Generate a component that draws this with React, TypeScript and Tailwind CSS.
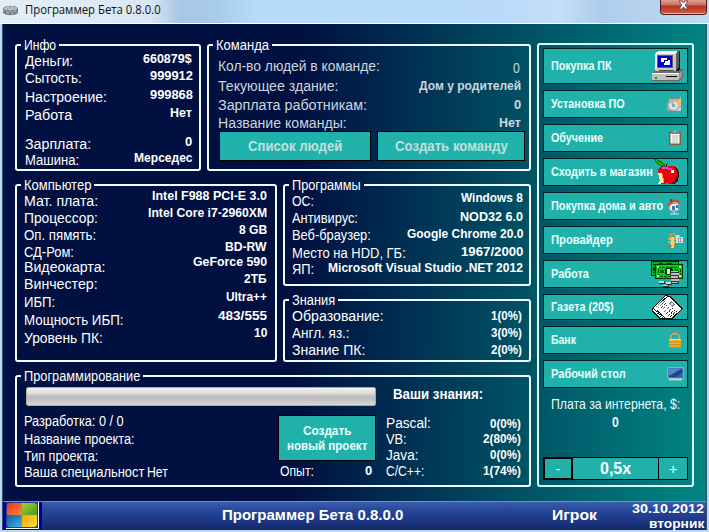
import { useLayoutEffect, useRef, useState } from 'react';
import type { ReactNode } from 'react';

/* Text squeezed or stretched horizontally to a given width. */
function Fit({ w, className = '', children }: { w: number; className?: string; children: ReactNode }) {
  const ref = useRef<HTMLSpanElement>(null);
  const [scale, setScale] = useState(1);
  useLayoutEffect(() => {
    if (ref.current && ref.current.offsetWidth) {
      setScale(w / ref.current.offsetWidth);
    }
  }, [w, children]);
  return (
    <span className={`block shrink-0 ${className}`} style={{ width: w }}>
      <span ref={ref} className="inline-block origin-left whitespace-nowrap align-top" style={{ transform: `scaleX(${scale})` }}>
        {children}
      </span>
    </span>
  );
}

type Line = [text: string, width: number, className: string];

function Labels({ lines, className = '' }: { lines: Line[]; className?: string }) {
  return (
    <div className={`flex flex-col items-start text-[14px] leading-[14px] ${className}`}>
      {lines.map(([text, w, cls]) => (
        <Fit key={text} w={w} className={cls}>{text}</Fit>
      ))}
    </div>
  );
}

function Values({ lines, className = '' }: { lines: Line[]; className?: string }) {
  return (
    <div className={`flex flex-col items-end text-[13px] leading-[14px] font-bold ${className}`}>
      {lines.map(([text, w, cls], i) => (
        <Fit key={i} w={w} className={cls}>{text}</Fit>
      ))}
    </div>
  );
}

function Group({ title, w, className, children }: { title: string; w: number; className: string; children: ReactNode }) {
  return (
    <fieldset className={`m-0 min-w-0 shrink-0 rounded-[3px] border-2 border-[#f2fbff] p-0 ${className}`}>
      <legend className="ml-[4px] px-[3px] text-[14px] leading-[14px]">
        <Fit w={w}>{title}</Fit>
      </legend>
      <div className="-mt-[6px]">{children}</div>
    </fieldset>
  );
}

const px = { shapeRendering: 'crispEdges' as const };

function ComputerIcon() {
  return (
    <svg width="31" height="32" viewBox="0 0 31 32" {...px}>
      <path d="M3 4 6 1h19v2l-3 1z" fill="#e8e8e8" />
      <path d="M24 3l2-2h1v17l-4 4V4z" fill="#5c5c5c" />
      <path d="M27 1h1v18l-3 3h-1v-2l3-3z" fill="#101010" />
      <path d="M3 3h21v18H3z" fill="#c8c8c8" />
      <path d="M4 2h20v2H4zM3 4h2v15H3z" fill="#f4f4f4" />
      <path d="M5 5h16v13H5z" fill="#606060" />
      <path d="M6 6h14v11H6z" fill="#0000c8" />
      <path d="M9 8h6v4H9zM12 10h6v5h-6z" fill="#fff" />
      <path d="M12 10h4v1h-4zM12 10h1v3h-1z" fill="#000080" />
      <path d="M7 20h15v2H7z" fill="#505050" />
      <path d="M0 23l3-2h23l3-2h2v8l-4 4H0z" fill="#6c6c6c" />
      <path d="M0 23h27v8H0z" fill="#c0c0c0" />
      <path d="M0 23h27v1H0z" fill="#fff" />
      <path d="M14 26h11v1H14z" fill="#000" />
      <path d="M0 30h27v1H0z" fill="#666" />
      <path d="M3 27h2v2H3z" fill="#00a000" />
      <path d="M27 23l3-3v6l-3 4z" fill="#999" />
    </svg>
  );
}

function SoftwareIcon() {
  return (
    <svg width="16" height="16" viewBox="0 0 16 16">
      <path d="M3 1h12v14H4V6H3z" fill="#a9c0cc" />
      <path d="M3 1h11v2H3z" fill="#748992" />
      <path d="M4 3h10v2H4z" fill="#e7b64d" />
      <path d="M12 4h3v6h-3z" fill="#f0c65a" />
      <path d="M1 6h8v9H1z" fill="#9ba5a5" />
      <circle cx="7.500" cy="9.500" r="5" fill="#dfe3e3" stroke="#939999" strokeWidth=".7" />
      <path d="M7.500 9.500 4 5.700A5 5 0 0 1 8 4.600z" fill="#b0b6b9" />
      <circle cx="7.500" cy="9.500" r="1.600" fill="#788486" />
      <circle cx="7.500" cy="9.500" r=".6" fill="#fff" />
      <path d="M12 12h3v3h-3z" fill="#cad3d6" />
    </svg>
  );
}

function ClipboardIcon() {
  return (
    <svg width="14" height="16" viewBox="0 0 14 16">
      <rect x="1" y="2" width="12" height="13" rx="1" fill="#7d6044" />
      <path d="M2.500 3.500h9v10h-9z" fill="#fbfbf5" />
      <path d="M4 1.500h6v2.500H4z" fill="#778087" />
      <path d="M5.500.5h3v2h-3z" fill="#a7adaf" />
      <path d="M4 6h6M4 8h6M4 10h6M4 12h6" stroke="#9eaaac" strokeWidth=".8" />
    </svg>
  );
}

function AppleIcon() {
  return (
    <svg width="26" height="26" viewBox="0 0 26 26" {...px}>
      <path d="M5 9c2-2 5-3 8-1 4-2 8-1 10 1 3 5 2 11-3 16h-5l-2-1-2 1H6l2-6-3-3-1-4z" fill="#ec0014" />
      <path d="M23 9c4 5 2 12-3 16h-4c6-3 8-9 7-16z" fill="#9c0014" />
      <path d="M20 8c6 3 6 12 0 17" stroke="#2a0006" fill="none" />
      <path d="M4 14h3l2 2-1 3 2 1-1 4-5 1 2-4-1-3z" fill="#ffefb0" />
      <path d="M8 15l1 2-1 2 2 1-1 4" stroke="#ff9a50" fill="none" />
      <path d="M8 8h6v2H8zM14 9h4v2h-4z" fill="#f040c8" />
      <path d="M17 11h3v3h-3z" fill="#fff" />
      <path d="M12 8c0-2 0-3 2-4" stroke="#402000" fill="none" />
      <path d="M0 0l5 1 4 2 2 3v2L7 7 3 5z" fill="#087d16" />
      <path d="M2 1l3 3 4 2" stroke="#1fd31f" fill="none" />
    </svg>
  );
}

function HouseIcon() {
  return (
    <svg width="16" height="17" viewBox="0 0 16 17">
      <circle cx="8" cy="8.500" r="5.500" fill="#8fb8d8" />
      <path d="M4 6h8v6H4z" fill="#f0f4f8" />
      <path d="M1 7.500 7 1l6 1.500 1.500 4.500-3.500-3-3 0-5 4.500z" fill="#c4502f" />
      <path d="M4 1h2v3H4z" fill="#8d3c2b" />
      <path d="M6 8h3v4H6z" fill="#4774ad" />
      <path d="M10 7h2.500v3H10z" fill="#3473b8" />
      <path d="M7.500 14h1.500v2H7.500zM4 15.300h9v1.200H4z" fill="#c7d4da" />
    </svg>
  );
}

function ProviderIcon() {
  return (
    <svg width="16" height="16" viewBox="0 0 16 16">
      <path d="M3 6V3.500C3 1 8 1 8 3.500V6" fill="none" stroke="#c59a52" strokeWidth="1.500" />
      <path d="M1 6h8v2H1zM1 9h9v1.700H1zM3 11h5v1.500H3z" fill="#e9aa33" />
      <path d="M4 5h3v11H4z" fill="#ffd568" />
      <path d="M0 5.500h1v5H0zM3 13h1.500v2H3zM7 13h1v2H7z" fill="#b97813" />
      <path d="M8.500 3h4v2H16v6H9.500z" fill="#d9dcd6" />
      <path d="M11 6h4v4h-4z" fill="#8f9892" />
      <path d="M12 7h1v2h-1zM14 7h1v2h-1z" fill="#fff" />
    </svg>
  );
}

function MoneyIcon() {
  return (
    <svg width="33" height="26" viewBox="0 0 33 26" {...px}>
      <path d="M0 0h28v15H0z" fill="#003800" />
      <path d="M1 1h26v13H1z" fill="#00b41c" />
      <path d="M2 3h4v1H2zM2 6h2v4H2zM2 11h3v1H2zM8 2h4v1H8zM15 2h6v1h-6z" fill="#004700" />
      <path d="M4 3h28v15H4z" fill="#003800" />
      <path d="M5 4h26v13H5z" fill="#0bc71f" />
      <path d="M7 6h22v9H7z" fill="none" stroke="#005000" strokeDasharray="3 1" />
      <path d="M6 5h2v2H6zM28 5h2v2h-2zM6 14h2v2H6zM28 14h2v2h-2z" fill="#d4ff70" />
      <path d="M9 9h4v3H9zM24 8h3v2h-3z" fill="#006a10" />
      <circle cx="18" cy="10.500" r="4" fill="#003000" />
      <path d="M16 8h3v5h-3z" fill="#e0f2d0" />
      <path d="M20 10h8v13h-8z" fill="#303030" />
      <path d="M20 10h7v1h-7zM20 12h8v2h-8zM20 15h7v2h-7zM20 18h8v2h-8zM21 21h6v1h-6z" fill="#b9bdbd" />
      <path d="M8 20h6v3H8zM15 21h6v3h-6zM12 24h6v2h-6z" fill="#333" />
      <path d="M8 20h5v2H8zM15 21h5v2h-5zM12 24h5v1h-5z" fill="#d2d6d6" />
    </svg>
  );
}

function NewspaperIcon() {
  return (
    <svg width="31" height="24" viewBox="0 0 31 24" {...px}>
      <path d="M0 13 13 0l5 1 13 13-11 10H7l-7-8z" fill="#111" />
      <path d="M1 13 13 1l4 1-4 5-8 9zM6 15 17 2l13 12-11 9h-6z" fill="#fff" />
      <path d="M1 14l4 2 7 7H8l-7-7z" fill="#fff" />
      <path d="M3 15l7 8M5 16l6 7" stroke="#222" strokeDasharray="1 1" />
      <path d="M4 12l7-7M6 13l7-7" stroke="#777" strokeDasharray="2 1" />
      <path d="M9 13l6-6M16 21l9-8M18 22l8-7M14 19l9-8" stroke="#333" strokeDasharray="1 1" />
      <path d="M11 14l4-4M12 17l6-6" stroke="#666" strokeDasharray="1 1" />
      <path d="M19 6l4 4-3 2-3-3z" fill="#8a8a8a" />
      <path d="M19 8h2v2h-2z" fill="#e0e0e0" />
      <path d="M9 7l6-5" stroke="#000" />
    </svg>
  );
}

function LockIcon() {
  return (
    <svg width="14" height="16" viewBox="0 0 14 16">
      <path d="M3 8V4.500C3 .1 11 .1 11 4.500V8" fill="none" stroke="#9a7952" strokeWidth="2.200" />
      <path d="M3 8V4.500C3 .5 11 .5 11 4.500V8" fill="none" stroke="#e6d8a8" strokeWidth=".9" />
      <path d="M1 7h12v8.500H1z" fill="#eeb62d" />
      <path d="M1 7h12v1H1z" fill="#ffe080" />
      <path d="M1 10h12M1 12.500h12M1 15h12" stroke="#c18718" strokeWidth=".9" />
    </svg>
  );
}

function DesktopIcon() {
  return (
    <svg width="17" height="14" viewBox="0 0 17 14">
      <path d="M.5.5h16v11H.5z" fill="#b9cede" />
      <path d="M1.300 1.300h14.400v9.400H1.300z" fill="#1b4391" />
      <path d="M1.500 1.500H15L2 9z" fill="#5189c9" />
      <path d="M9 10.500 15.500 5v5.500z" fill="#3567b3" />
      <path d="M2 11.500h13v2H2z" fill="#c7d1d5" />
    </svg>
  );
}

function AppIcon() {
  return (
    <svg width="17" height="11" viewBox="0 0 17 11">
      <path d="M1 3C4 0 13 0 16 3v5c-3 3-12 3-15 0z" fill="#777c84" />
      <path d="M1 3c4-2 11-2 15 0-3 3-12 3-15 0z" fill="#adb1b8" />
      <path d="M2 2.500 7 9M5 1.500 11 9M9 1l6 7M7 1 1 6M12 1.500 4 9M15 2.500 9 10" stroke="#d9dce0" strokeWidth=".5" />
    </svg>
  );
}

function StartLogo() {
  return (
    <svg width="33" height="27" viewBox="0 0 33 27">
      <defs>
        <linearGradient id="r" x2="1" y2="1"><stop stopColor="#ed331d" /><stop offset="1" stopColor="#f58a3a" /></linearGradient>
        <linearGradient id="g" x2="1" y2="1"><stop stopColor="#a4d532" /><stop offset="1" stopColor="#46961d" /></linearGradient>
        <linearGradient id="b" x2="1" y2="1"><stop stopColor="#125b9e" /><stop offset="1" stopColor="#43b7e5" /></linearGradient>
        <linearGradient id="y" x2="1" y2="1"><stop stopColor="#f5a500" /><stop offset="1" stopColor="#ffe13d" /></linearGradient>
      </defs>
      <path d="M0 0h33v27H0z" fill="#fff" />
      <path d="M0 0h32v26H0z" fill="#24408e" />
      <path d="M3 1h13v12H1V3z" fill="url(#r)" />
      <path d="M16 1h13l2 2v10H16z" fill="url(#g)" />
      <path d="M1 13h15v12H3l-2-2z" fill="url(#b)" />
      <path d="M16 13h15v10l-2 2H16z" fill="url(#y)" />
    </svg>
  );
}

const info: Line[] = [
  ['Деньги:', 48, 'mt-[8px]'],
  ['Сытость:', 57, 'mt-[3px]'],
  ['Настроение:', 82, 'mt-[5px]'],
  ['Работа', 47, 'mt-[4px]'],
  ['Зарплата:', 66, 'mt-[15px]'],
  ['Машина:', 54, 'mt-[2px]'],
];
const infoValues: Line[] = [
  ['660879$', 49, 'mt-[6px]'],
  ['999912', 42.5, 'mt-[3px]'],
  ['999868', 42.5, 'mt-[5px]'],
  ['Нет', 22, 'mt-[4px]'],
  ['0', 7, 'mt-[15px]'],
  ['Мерседес', 58.5, 'mt-[2px]'],
];
const team: Line[] = [
  ['Кол-во людей в команде:', 162, 'mt-[13px]'],
  ['Текующее здание:', 120, 'mt-[6px]'],
  ['Зарплата работникам:', 149, 'mt-[5px]'],
  ['Название команды:', 129, 'mt-[4px]'],
];
const teamValues: Line[] = [
  ['0', 7, 'mt-[15px] mr-[1px] text-[14px] font-normal'],
  ['Дом у родителей', 102, 'mt-[4px]'],
  ['0', 7, 'mt-[5px]'],
  ['Нет', 22, 'mt-[4px]'],
];
const computer: Line[] = [
  ['Мат. плата:', 74, 'mt-[8px]'],
  ['Процессор:', 74, 'mt-[3px]'],
  ['Оп. пямять:', 72, 'mt-[3px]'],
  ['СД-Ром:', 50, 'mt-[3px]'],
  ['Видеокарта:', 82, 'mt-[1px]'],
  ['Винчестер:', 74, 'mt-[3px]'],
  ['ИБП:', 31, 'mt-[4px]'],
  ['Мощность ИБП:', 99, 'mt-[4px]'],
  ['Уровень ПК:', 79, 'mt-[4px]'],
];
const computerValues: Line[] = [
  ['Intel F988 PCI-E 3.0', 115, 'mt-[3px]'],
  ['Intel Core i7-2960XM', 119, 'mt-[3px]'],
  ['8 GB', 28, 'mt-[3px]'],
  ['BD-RW', 42, 'mt-[3px]'],
  ['GeForce 590', 74, 'mt-[1px]'],
  ['2ТБ', 23, 'mt-[3px]'],
  ['Ultra++', 41, 'mt-[4px]'],
  ['483/555', 49, 'mt-[5px]'],
  ['10', 13, 'mt-[3px]'],
];
const programs: Line[] = [
  ['ОС:', 22, 'mt-[8px]'],
  ['Антивирус:', 66, 'mt-[3px]'],
  ['Веб-браузер:', 79, 'mt-[3px]'],
  ['Место на HDD, ГБ:', 114, 'mt-[4px]'],
  ['ЯП:', 22, 'mt-[2px]'],
];
const programValues: Line[] = [
  ['Windows 8', 62, 'mt-[5px]'],
  ['NOD32 6.0', 63, 'mt-[5px]'],
  ['Google Chrome 20.0', 116, 'mt-[3px]'],
  ['1967/2000', 62, 'mt-[4px]'],
  ['Microsoft Visual Studio .NET 2012', 195, 'mt-[2px]'],
];
const knowledge: Line[] = [
  ['Образование:', 92, 'mt-[8px]'],
  ['Англ. яз.:', 58, 'mt-[3px]'],
  ['Знание ПК:', 73, 'mt-[3px]'],
];
const knowledgeValues: Line[] = [
  ['1(0%)', 31, 'mt-[8px]'],
  ['3(0%)', 31, 'mt-[3px]'],
  ['2(0%)', 31, 'mt-[3px]'],
];
const languages: Line[] = [
  ['Pascal:', 45, 'mt-[39px]'],
  ['VB:', 21, 'mt-[2px]'],
  ['Java:', 32, 'mt-[2px]'],
  ['C/C++:', 38, 'mt-[2px]'],
];
const languageValues: Line[] = [
  ['0(0%)', 31, 'mt-[40px]'],
  ['2(80%)', 38, 'mt-[1px]'],
  ['0(0%)', 31, 'mt-[2px]'],
  ['1(74%)', 38, 'mt-[2px]'],
];

const menu: { text: string; w: number; h: string; icon: ReactNode; pad: string }[] = [
  { text: 'Покупка ПК', w: 61, h: 'h-[36px]', icon: <ComputerIcon />, pad: 'pr-[4px]' },
  { text: 'Установка ПО', w: 74, h: 'h-[28px]', icon: <SoftwareIcon />, pad: 'pr-[5px]' },
  { text: 'Обучение', w: 52, h: 'h-[28px]', icon: <ClipboardIcon />, pad: 'pr-[5px]' },
  { text: 'Сходить в магазин', w: 102, h: 'h-[28px]', icon: <AppleIcon />, pad: 'pr-[7px]' },
  { text: 'Покупка дома и авто', w: 112, h: 'h-[28px]', icon: <HouseIcon />, pad: 'pr-[5px]' },
  { text: 'Провайдер', w: 62, h: 'h-[28px]', icon: <ProviderIcon />, pad: 'pr-[4px]' },
  { text: 'Работа', w: 38, h: 'h-[28px]', icon: <MoneyIcon />, pad: 'pr-[3px]' },
  { text: 'Газета (20$)', w: 63, h: 'h-[26px]', icon: <NewspaperIcon />, pad: 'pr-[4px]' },
  { text: 'Банк', w: 25, h: 'h-[28px]', icon: <LockIcon />, pad: 'pr-[5px]' },
  { text: 'Рабочий стол', w: 75, h: 'h-[28px]', icon: <DesktopIcon />, pad: 'pr-[3px]' },
];

function TitleBar() {
  return (
    <header className="flex h-[24px] shrink-0 items-start justify-between border-b border-white bg-[linear-gradient(90deg,#e3eef8_0,#d9e7f5_150px,#a9c6e4_180px,#a8cbec_215px,#b8dafb_260px,#b9dafa_500px,#c4dff8_560px,#aecdeb_600px,#c0daf3_709px)] pl-[2px]">
      <div className="flex items-center pt-[2px]">
        <AppIcon />
        <Fit w={136} className="ml-[6px] font-['Open_Sans','Noto_Sans',sans-serif] text-[12px] leading-[16px] text-[#101010]">
          Программер Бета 0.8.0.0
        </Fit>
      </div>
      <button className="mr-[2px] flex h-[15px] w-[47px] justify-center rounded-b-[4px] border border-t-0 border-[#4b1a1c] bg-[linear-gradient(#e0a095_0,#cf6f62_5px,#b83224_6px,#d25c43_100%)] shadow-[inset_0_-1px_0_#eeb0a0]">
        <svg width="11" height="10" viewBox="0 0 11 10">
          <path d="M1 1h3l1.500 2L7 1h3L7.200 5 10 9H7L5.500 7 4 9H1l2.800-4z" fill="#fff" stroke="#5c3838" strokeWidth=".8" />
        </svg>
      </button>
    </header>
  );
}

export default function App() {
  return (
    <div className="flex h-[532px] w-[709px] flex-col overflow-hidden bg-[#bdd9f2] font-['Liberation_Sans',Arial,sans-serif] text-white">
      <TitleBar />
      <div className="mr-[2px] ml-[2px] flex h-[506px] shrink-0 flex-col border-x border-[#31506f] bg-[linear-gradient(91deg,#001040_0,#001040_42%,#008381_98%)]">
        <main className="flex h-[477px] gap-[6px] pt-[14px] pl-[12px]">
          <div className="flex w-[516px] shrink-0 flex-col gap-[7px]">
            <div className="flex gap-[6px]">
              <Group title="Инфо" w={32} className="h-[133px] w-[186px]">
                <div className="flex justify-between pr-[7px] pl-[8px]">
                  <Labels lines={info} />
                  <Values lines={infoValues} />
                </div>
              </Group>
              <Group title="Команда" w={53} className="h-[133px] w-[324px]">
                <div className="flex justify-between pr-[8px] pl-[9px] text-[#cdd6de]">
                  <Labels lines={team} />
                  <Values lines={teamValues} />
                </div>
                <div className="mt-px flex gap-[6px] pl-[10px] text-[14px] leading-[16px] font-bold text-[#bfe0dd]">
                  <button className="flex h-[30px] w-[152px] items-center justify-center border border-black bg-[#20b2aa]">
                    <Fit w={94}>Список людей</Fit>
                  </button>
                  <button className="flex h-[30px] w-[148px] items-center justify-center border border-black bg-[#20b2aa]">
                    <Fit w={113}>Создать команду</Fit>
                  </button>
                </div>
              </Group>
            </div>
            <div className="flex gap-[6px]">
              <Group title="Компьютер" w={67} className="h-[184px] w-[262px]">
                <div className="flex justify-between pr-[8px] pl-[7px]">
                  <Labels lines={computer} className="w-[100px]" />
                  <Values lines={computerValues} />
                </div>
              </Group>
              <div className="flex flex-col gap-[7px]">
                <Group title="Программы" w={69} className="h-[108px] w-[248px]">
                  <div className="flex pr-[6px] pl-[7px]">
                    <Labels lines={programs} className="w-0" />
                    <Values lines={programValues} className="flex-1" />
                  </div>
                </Group>
                <Group title="Знания" w={43} className="h-[69px] w-[248px]">
                  <div className="flex justify-between pr-[7px] pl-[7px]">
                    <Labels lines={knowledge} />
                    <Values lines={knowledgeValues} />
                  </div>
                </Group>
              </div>
            </div>
            <Group title="Программирование" w={116} className="h-[118px] w-[516px]">
              <div className="flex">
                <div className="w-[359px] pt-[10px] pl-[9px]">
                  <div className="h-[19px] w-[350px] rounded-[2px] border border-[#a8a8a8] bg-[linear-gradient(#f4f4f4_0,#d8d8d8_6px,#bcbcbc_8px,#c2c2c2_12px,#d8d8d8_100%)]" />
                  <div className="flex justify-between">
                    <div className="-ml-[2px] pt-[8px] text-[14px] leading-[14px]">
                      <Fit w={100}>Разработка: 0 / 0</Fit>
                      <Fit w={111} className="mt-[4px]">Название проекта:</Fit>
                      <Fit w={74} className="mt-[3px]">Тип проекта:</Fit>
                      <div className="mt-[2px] flex gap-[3px]">
                        <Fit w={120}>Ваша специальност</Fit>
                        <Fit w={21}>Нет</Fit>
                      </div>
                    </div>
                    <div className="w-[98px] pt-[9px]">
                      <button className="flex h-[46px] w-[98px] flex-col items-center justify-center border border-black bg-[#20b2aa] text-[13px] leading-[15px] font-bold text-[#eafffc]">
                        <Fit w={48}>Создать</Fit>
                        <Fit w={80}>новый проект</Fit>
                      </button>
                      <div className="mt-[3px] flex justify-between pr-[4px] pl-[2px] text-[14px] leading-[14px]">
                        <Fit w={34}>Опыт:</Fit>
                        <Fit w={7} className="text-[13px] font-bold">0</Fit>
                      </div>
                    </div>
                  </div>
                </div>
                <div className="w-[145px] pl-[10px]">
                  <Fit w={90} className="-mb-[24px] ml-[7px] pt-[10px] text-[14px] leading-[14px] font-bold">Ваши знания:</Fit>
                  <div className="flex justify-between">
                    <Labels lines={languages} />
                    <Values lines={languageValues} />
                  </div>
                </div>
              </div>
            </Group>
          </div>
          <aside className="mt-[5px] flex h-[444px] w-[157px] shrink-0 flex-col rounded-[3px] border-2 border-[#d9fbff] pt-[3px] pl-[4px]">
            <nav className="flex flex-col gap-[6px]">
              {menu.map((m) => (
                <button
                  key={m.text}
                  className={`flex w-[145px] shrink-0 items-center justify-between border border-[#02201f] bg-[#20b2aa] pl-[7px] text-[13px] leading-[16px] font-bold text-[#eafffc] ${m.h} ${m.pad}`}
                >
                  <Fit w={m.w}>{m.text}</Fit>
                  <span className="-ml-2 shrink-0">{m.icon}</span>
                </button>
              ))}
            </nav>
            <div className="mt-[7px] flex w-[145px] flex-col items-center text-[15px] leading-[18px] text-[#e8f8f8]">
              <Fit w={129}>Плата за интернета, $:</Fit>
              <Fit w={7} className="text-[14px] font-bold">0</Fit>
            </div>
            <div className="mt-[26px] flex h-[23px] w-[145px] border border-black bg-[#20b2aa] leading-[20px]">
              <button className="w-[29px] border-r-2 border-b border-l border-t border-black text-[14px]">-</button>
              <div className="flex flex-1 items-center justify-center text-[16px] font-bold">
                <Fit w={31}>0,5x</Fit>
              </div>
              <button className="w-[29px] border-l border-black text-[14px]">+</button>
            </div>
          </aside>
        </main>
        <footer className="flex h-[29px] border-t border-[#6d8fd8] bg-[linear-gradient(#3a5db0_0,#28489a_8px,#1b3480_20px,#142868_100%)] text-[15px] leading-[16px] font-bold">
          <button className="flex w-[39px] items-start justify-center bg-[#0000a0]">
            <StartLogo />
          </button>
          <Fit w={181} className="mt-[5px] ml-[180px]">Программер Бета 0.8.0.0</Fit>
          <Fit w={45} className="mt-[5px] ml-[149px]">Игрок</Fit>
          <div className="ml-auto flex flex-col items-end pr-[2px] text-[13px] leading-[15px]">
            <Fit w={72} className="-mt-px">30.10.2012</Fit>
            <Fit w={55}>вторник</Fit>
          </div>
        </footer>
      </div>
    </div>
  );
}
